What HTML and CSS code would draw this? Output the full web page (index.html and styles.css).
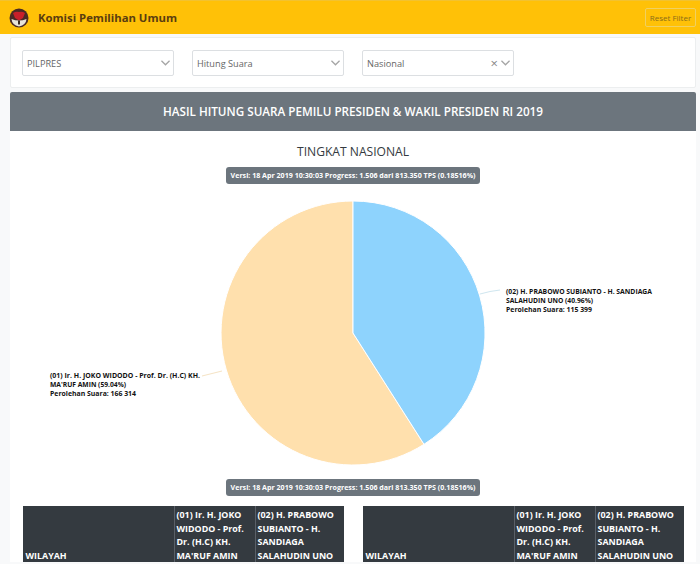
FILE: index.html
```html
<!DOCTYPE html>
<html>
<head>
	<meta charset="UTF-8">
	<title>Komisi Pemilihan Umum</title>
	<link rel="stylesheet" href="styles.css">
</head>
<body>
	<header class="navbar">
		<div class="brand">
			<svg class="logo" width="20" height="20" viewBox="0 0 20 20">
				<circle cx="10" cy="10" r="9.5" fill="#4a2a25"/>
				<path d="M2.500 11 Q10 14 17.500 11 Q17 17 10 18.500 Q3 17 2.500 11Z" fill="#e8e4d8"/>
				<path d="M4 5 Q7 3 10 4 Q13 3 16 5 L14 10 L10 12.500 L6 10Z" fill="#c8202a"/>
				<path d="M9 12.500h2v4H9z" fill="#3a2a22"/>
			</svg>
			<span class="brand-name">Komisi Pemilihan Umum</span>
		</div>
		<button class="reset-btn">Reset Filter</button>
	</header>

	<div class="filter-card">
		<div class="select-box">
			<span class="select-text">PILPRES</span>
			<svg class="chevron" width="9" height="6" viewBox="0 0 10 6"><path d="M0.5 0.5 L5 5 L9.5 0.5" fill="none" stroke="#a5a5a5" stroke-width="1.4"/></svg>
		</div>
		<div class="select-box">
			<span class="select-text">Hitung Suara</span>
			<svg class="chevron" width="9" height="6" viewBox="0 0 10 6"><path d="M0.5 0.5 L5 5 L9.5 0.5" fill="none" stroke="#a5a5a5" stroke-width="1.4"/></svg>
		</div>
		<div class="select-box">
			<span class="select-text">Nasional</span>
			<span class="clear">&times;</span>
			<svg class="chevron" width="9" height="6" viewBox="0 0 10 6"><path d="M0.5 0.5 L5 5 L9.5 0.5" fill="none" stroke="#a5a5a5" stroke-width="1.4"/></svg>
		</div>
	</div>

	<div class="result-card">
		<h1 class="result-title">HASIL HITUNG SUARA PEMILU PRESIDEN &amp; WAKIL PRESIDEN RI 2019</h1>
		<div class="result-body">
			<h2 class="level-title">TINGKAT NASIONAL</h2>
			<div class="version-badge">Versi: 18 Apr 2019 10:30:03 Progress: 1.506 dari 813.350 TPS (0.18516%)</div>

			<svg class="chart" width="686" height="289" viewBox="0 0 686 289">
				<path d="M343 143 L343 11 A132 132 0 1 0 414 254.300 Z" fill="#ffe0ad" stroke="#fff"/>
				<path d="M343 143 L343 11 A132 132 0 0 1 414 254.300 Z" fill="#8ed3fd" stroke="#fff"/>
				<path d="M470 104 Q480 101 490 100" fill="none" stroke="#cfe6ef"/>
				<path d="M212 181 Q200 184 192 186" fill="none" stroke="#f5e3c4"/>
				<text class="label" x="496" y="104" textLength="146" lengthAdjust="spacingAndGlyphs">(02) H. PRABOWO SUBIANTO - H. SANDIAGA</text>
				<text class="label" x="496" y="113" textLength="87" lengthAdjust="spacingAndGlyphs">SALAHUDIN UNO (40.96%)</text>
				<text class="label" x="496" y="122" textLength="86" lengthAdjust="spacingAndGlyphs">Perolehan Suara: 115 399</text>
				<text class="label" x="40" y="188" textLength="150" lengthAdjust="spacingAndGlyphs">(01) Ir. H. JOKO WIDODO - Prof. Dr. (H.C) KH.</text>
				<text class="label" x="40" y="197" textLength="76" lengthAdjust="spacingAndGlyphs">MA'RUF AMIN (59.04%)</text>
				<text class="label" x="40" y="206" textLength="86" lengthAdjust="spacingAndGlyphs">Perolehan Suara: 166 314</text>
			</svg>

			<div class="version-badge">Versi: 18 Apr 2019 10:30:03 Progress: 1.506 dari 813.350 TPS (0.18516%)</div>

			<div class="tables">
				<table class="vote-table">
					<tr>
						<th class="col-area">WILAYAH</th>
						<th class="col-one">(01) Ir. H. JOKO WIDODO - Prof. Dr. (H.C) KH. MA'RUF AMIN</th>
						<th class="col-two">(02) H. PRABOWO SUBIANTO - H. SANDIAGA SALAHUDIN UNO</th>
					</tr>
				</table>
				<table class="vote-table">
					<tr>
						<th class="col-area">WILAYAH</th>
						<th class="col-one">(01) Ir. H. JOKO WIDODO - Prof. Dr. (H.C) KH. MA'RUF AMIN</th>
						<th class="col-two">(02) H. PRABOWO SUBIANTO - H. SANDIAGA SALAHUDIN UNO</th>
					</tr>
				</table>
			</div>
		</div>
	</div>
</body>
</html>
```

FILE: styles.css
```css
body {
	font-family: "Open Sans", Arial, sans-serif;
	margin: 0;
	padding: 0;
	height: 564px;
	overflow: hidden;
	background-color: #f8f9fa;
	color: #343a40;
}

.navbar {
	display: flex;
	justify-content: space-between;
	align-items: center;
	height: 34px;
	padding: 0 4px 0 9px;
	background-color: #ffc107;
	border-top: 1px solid #f2c230;
	box-sizing: border-box;
}

.brand {
	display: flex;
	align-items: center;
	gap: 9px;
}

.brand-name {
	font-size: 11.3px;
	font-weight: 700;
	color: #5a3d10;
}

.reset-btn {
	width: 51px;
	height: 19px;
	padding: 0;
	font-family: inherit;
	font-size: 8px;
	color: #8a6d1a;
	background: transparent;
	border: 1px solid #f0d060;
	border-radius: 2px;
}

.filter-card {
	display: flex;
	gap: 18px;
	height: 51px;
	margin: 3px 4px 4px 10px;
	padding: 12px 11px 0;
	box-sizing: border-box;
	background-color: #fff;
	border: 1px solid #eceeef;
	border-radius: 2px;
}

.select-box {
	display: flex;
	align-items: center;
	width: 152px;
	height: 26px;
	padding: 0 3px 0 4px;
	box-sizing: border-box;
	background-color: #fff;
	border: 1px solid #dcdfe2;
	border-radius: 2px;
}

.select-text {
	flex: 1;
	font-size: 9.2px;
	color: #666;
}

.clear {
	margin-right: 3px;
	font-size: 13px;
	line-height: 13px;
	color: #888;
}

.chevron {
	margin-right: 0;
}

.result-card {
	margin: 0 4px 0 10px;
	background-color: #fff;
}

.result-title {
	margin: 0;
	height: 39px;
	line-height: 39px;
	text-align: center;
	font-size: 11.7px;
	font-weight: 600;
	color: #fff;
	background-color: #6c757d;
	border-radius: 2px 2px 0 0;
}

.result-body {
	display: flex;
	flex-direction: column;
	align-items: center;
	padding: 12px 0 0;
}

.level-title {
	margin: 0 0 7px;
	font-size: 12.1px;
	line-height: 17px;
	font-weight: 500;
	color: #343a40;
}

.version-badge {
	height: 17px;
	padding: 0 5px;
	line-height: 17px;
	font-size: 7.1px;
	font-weight: 700;
	color: #fff;
	background-color: #6c757d;
	border-radius: 3px;
}

.chart {
	display: block;
	margin: 6px 0 0;
}

.label {
	font-size: 7.2px;
	font-weight: 700;
	fill: #111;
}

.tables {
	display: flex;
	gap: 19px;
	margin-top: 10px;
}

.vote-table {
	width: 321px;
	border-collapse: collapse;
	table-layout: fixed;
}

.vote-table th {
	padding: 2px 3px 0;
	text-align: left;
	vertical-align: bottom;
	font-size: 8.9px;
	line-height: 13.5px;
	font-weight: 700;
	color: #fff;
	background-color: #343a40;
	border-left: 1px solid #5a6068;
}

.vote-table th:first-child {
	border-left: 0;
}

.vote-table .col-one,
.vote-table .col-two {
	padding-left: 2px;
}

.col-area {
	width: 145px;
}

.col-one {
	width: 75px;
}
```
